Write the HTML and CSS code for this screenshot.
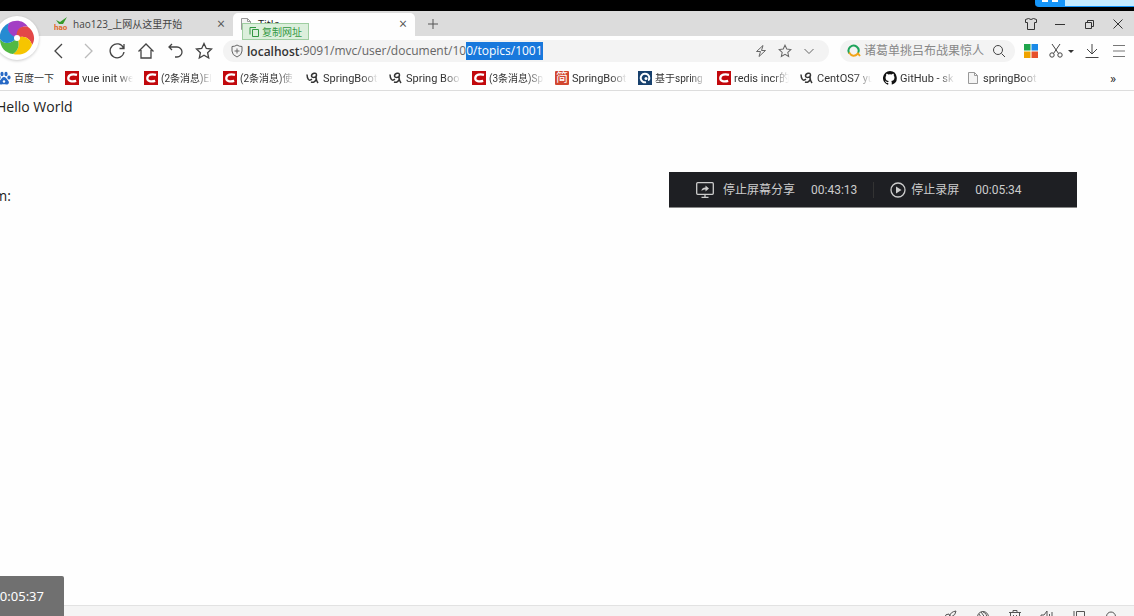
FILE: index.html
```html
<!DOCTYPE html>
<html lang="zh-CN">
<head>
    <meta charset="UTF-8">
    <title>Title</title>
    <link rel="stylesheet" href="styles.css">
</head>
<body>
    <!-- 共用图标 -->
    <svg class="symbols" aria-hidden="true">
        <symbol id="csdn" viewBox="0 0 14 14"><path fill="#c2080c" d="M0 0h14v14H0z"/><path d="M12 3.900C8 2.800 3.700 3.500 3.300 7c-.4 3.500 4 4 7.900 2.900" fill="none" stroke="#fff" stroke-width="2.300"/></symbol>
        <symbol id="spring" viewBox="0 0 14 14"><path d="M1 3.500c.2 5 2 7 5 4.700M5.500 5c0-3 5-4 5-1 0 3-5 3-5 1M10.500 3.500c-1 3-1 5 1.500 8.500M5 11c2.500 1 5-1 5.500-3.500" fill="none" stroke="#333" stroke-width="1.500"/></symbol>
        <symbol id="page" viewBox="0 0 14 14"><path d="M2.500 1.500h6l3 3v8h-9zM8.500 1.500v3h3" fill="#f4f4f4" stroke="#999"/></symbol>
        <symbol id="star" viewBox="0 0 18 18"><path d="M9 1.500l2.300 5 5.200.6-3.900 3.600 1.100 5.300L9 13.300 4.300 16l1.100-5.300L1.500 7.100l5.200-.6z" fill="none" stroke="currentColor" stroke-width="1.300"/></symbol>
    </svg>

    <div class="screen-edge"><div class="share-hint"><span></span></div></div>

    <header class="browser">
        <div class="logo">
            <svg viewBox="0 0 36 36">
                <path fill="#a33fc4" d="M18 18C10 16 6 9 10 3c6-4 15-3 19 4-7-2-11 3-11 11z"/>
                <path fill="#e34848" d="M18 18c-2-8 4-13 11-11 6 4 8 12 4 18-2-7-8-10-15-7z"/>
                <path fill="#f6c500" d="M18 18c7-3 13 0 15 7-3 8-11 11-19 9 6-4 7-10 4-16z"/>
                <path fill="#53b943" d="M18 18c3 6 2 12-4 16C6 33 1 27 1 19c4 6 11 5 17-1z"/>
                <path fill="#258bd2" d="M18 18C12 24 5 25 1 19 0 12 4 6 10 3c-3 6 0 12 8 15z"/>
                <circle cx="18" cy="18" r="3" fill="#fff"/>
            </svg>
        </div>

        <div class="tabs">
            <div class="tab">
                <svg class="fav" viewBox="0 0 14 14"><path d="M2 3l4 2 7-5-4 7H5z" fill="#379b2b"/><text x="0" y="13" font-size="8" font-weight="bold" fill="#e06a28">hao</text></svg>
                <span class="tab-title">hao123_上网从这里开始</span>
                <button class="tab-close" aria-label="关闭标签">×</button>
            </div>
            <div class="tab active">
                <svg class="fav"><use href="#page"/></svg>
                <span class="tab-title">Title</span>
                <button class="tab-close" aria-label="关闭标签">×</button>
                <button class="copy-url">
                    <svg viewBox="0 0 10 10"><path d="M3.500 2.500h6v7h-6zM1 7.500V.5h6" fill="none" stroke="currentColor"/></svg>复制网址
                </button>
            </div>
            <button class="new-tab" aria-label="新标签"><svg viewBox="0 0 12 12"><path d="M6 1v10M1 6h10"/></svg></button>
            <div class="window-buttons">
                <button aria-label="皮肤"><svg viewBox="0 0 14 14"><path d="M4.500 1.500q2.500 2 5 0l3 1v3h-2v7h-7v-7h-2v-3z"/></svg></button>
                <button aria-label="最小化"><svg viewBox="0 0 14 14"><path d="M2 7.500h10"/></svg></button>
                <button aria-label="还原"><svg viewBox="0 0 14 14"><path d="M3.500 5.500h6v6h-6zM5.500 5V3.500h6v6H10"/></svg></button>
                <button aria-label="关闭"><svg viewBox="0 0 14 14"><path d="M2.500 2.500l9 9M11.500 2.500l-9 9"/></svg></button>
            </div>
        </div>

        <div class="toolbar">
            <nav class="nav-buttons">
                <button aria-label="后退"><svg viewBox="0 0 18 18"><path d="M12 2L5 9l7 7"/></svg></button>
                <button aria-label="前进" disabled><svg viewBox="0 0 18 18"><path d="M6 2l7 7-7 7"/></svg></button>
                <button aria-label="刷新"><svg viewBox="0 0 18 18"><path d="M15.500 6A7 7 0 1 0 16 10M16 2v4.500h-4.500"/></svg></button>
                <button aria-label="主页"><svg viewBox="0 0 18 18"><path d="M1.500 9.500L9 2l7.500 7.500M4 8v8h10V8"/></svg></button>
                <button aria-label="恢复"><svg viewBox="0 0 18 18"><path d="M3 5h8a5 5 0 0 1 0 10H9M6 2L3 5l3 3"/></svg></button>
                <button aria-label="收藏"><svg><use href="#star"/></svg></button>
            </nav>

            <div class="address">
                <svg class="shield" viewBox="0 0 14 14"><path d="M7 1q2 1.500 5 1.500V7q0 4-5 6-5-2-5-6V2.500Q5 2.500 7 1zM7 4.500v5M4.500 7h5"/></svg>
                <label for="url">localhost</label>
                <input id="url" type="text" value=":9091/mvc/user/document/100/topics/1001" spellcheck="false">
                <button aria-label="极速模式"><svg viewBox="0 0 14 14"><path d="M9 1.500L2.500 7.500h4L5 12.500l6.500-6h-4z"/></svg></button>
                <button aria-label="收藏网址"><svg><use href="#star"/></svg></button>
                <button aria-label="展开"><svg viewBox="0 0 14 14"><path d="M2.500 5L7 9.500 11.500 5"/></svg></button>
            </div>

            <div class="search">
                <svg class="engine" viewBox="0 0 14 14"><path d="M2.500 9.500A5 5 0 1 1 11 9" fill="none" stroke="#20a45c" stroke-width="2"/><path d="M2 8.500q4 6 9 1l2 2.500" fill="none" stroke="#f0a419" stroke-width="2"/></svg>
                <input type="text" placeholder="诸葛单挑吕布战果惊人" aria-label="搜索">
                <button aria-label="搜索"><svg viewBox="0 0 14 14"><circle cx="6" cy="6" r="4.500"/><path d="M9.500 9.500L13 13"/></svg></button>
            </div>

            <div class="tools">
                <button aria-label="应用"><svg viewBox="0 0 14 14" class="apps"><path fill="#1fa54b" d="M0 0h6.500v6.500H0z"/><path fill="#1a8ae8" d="M7.500 0H14v6.500H7.500z"/><path fill="#efa300" d="M0 7.500h6.500V14H0z"/><path fill="#e6512c" d="M7.500 7.500H14V14H7.500z"/></svg></button>
                <button class="cut" aria-label="截图"><svg viewBox="0 0 14 14"><path d="M3 0l6.500 9.500M11 0L4.500 9.500"/><circle cx="3" cy="11" r="2.200"/><circle cx="11" cy="11" r="2.200"/></svg><i></i></button>
                <button aria-label="下载"><svg viewBox="0 0 14 14"><path d="M7 0v10M2 5l5 5 5-5M.5 13.500h13"/></svg></button>
                <button aria-label="菜单"><svg viewBox="0 0 14 14" class="menu"><path d="M1 1.500h12M1 7h12M1 12.500h12"/></svg></button>
            </div>
        </div>

        <nav class="bookmarks">
            <a class="first" href="#"><svg viewBox="0 0 14 14" fill="#2668c5"><ellipse cx="2" cy="6.500" rx="1.600" ry="2"/><ellipse cx="5" cy="3" rx="1.600" ry="2.200"/><ellipse cx="9" cy="3" rx="1.600" ry="2.200"/><ellipse cx="12" cy="6.500" rx="1.600" ry="2"/><path d="M7 6c2 0 2.500 2 4 3.500 2 2 .5 4-1.500 4-1.500 0-3.500-.5-5 0-2.500.3-3.500-2.500-1.500-4C4.500 8 5 6 7 6z"/><circle cx="7" cy="10.500" r="1.200" fill="#fff"/></svg><span>百度一下</span></a>
            <a class="narrow" href="#"><svg><use href="#csdn"/></svg><span>vue init we</span></a>
            <a class="narrow zh" href="#"><svg><use href="#csdn"/></svg><span>(2条消息)El</span></a>
            <a class="zh" href="#"><svg><use href="#csdn"/></svg><span>(2条消息)使</span></a>
            <a href="#"><svg><use href="#spring"/></svg><span>SpringBoot</span></a>
            <a href="#"><svg><use href="#spring"/></svg><span>Spring Boo</span></a>
            <a class="zh" href="#"><svg><use href="#csdn"/></svg><span>(3条消息)Sp</span></a>
            <a href="#"><svg viewBox="0 0 14 14"><rect width="14" height="14" rx="1" fill="#d2472f"/><text x="1" y="11" font-size="12" fill="#fff">简</text></svg><span>SpringBoot</span></a>
            <a class="narrow zh" href="#"><svg viewBox="0 0 14 14"><path fill="#17406d" d="M0 0h14v14H0z"/><path d="M8 11.200A4.300 4.300 0 1 1 11.300 7q0 2-1.300 2" fill="none" stroke="#fff" stroke-width="2"/><circle cx="8" cy="7.500" r="1.500" fill="#fff"/></svg><span>基于spring</span></a>
            <a href="#"><svg><use href="#csdn"/></svg><span>redis incr的</span></a>
            <a href="#"><svg><use href="#spring"/></svg><span>CentOS7 yu</span></a>
            <a href="#"><svg viewBox="0 0 16 16"><path fill="#111" d="M8 0a8 8 0 0 0-2.500 15.600c.4.100.5-.2.500-.4v-1.500c-2.200.5-2.700-.9-2.700-.9-.4-.9-.9-1.200-.9-1.200-.7-.5.100-.5.100-.5.800.1 1.200.8 1.200.8.700 1.200 1.900.9 2.300.7.100-.5.300-.9.500-1.100-1.800-.2-3.600-.9-3.600-4 0-.9.300-1.600.8-2.100-.1-.2-.4-1 .1-2.100 0 0 .7-.2 2.200.8a7.600 7.600 0 0 1 4 0c1.500-1 2.200-.8 2.200-.8.400 1.100.2 1.900.1 2.100.5.600.8 1.300.8 2.100 0 3.100-1.900 3.700-3.700 3.900.3.300.6.800.6 1.500v2.200c0 .2.100.5.500.4A8 8 0 0 0 8 0z"/></svg><span>GitHub - sk</span></a>
            <a href="#"><svg><use href="#page"/></svg><span>springBoot</span></a>
            <button class="more" aria-label="更多书签">»</button>
        </nav>
    </header>

    <main class="content">
        <p>Hello World</p>
        <p class="form-label">Form:</p>

        <div class="recorder">
            <button>
                <svg viewBox="0 0 18 16"><rect x=".7" y=".7" width="16.600" height="11.600" rx="1"/><path d="M9 12.500V15M5.500 15.300h7"/><path d="M5.500 9q0-3.500 4-3.500V3.500l3.500 3-3.500 3v-2Q7 7 5.500 9z" class="solid"/></svg>停止屏幕分享
            </button>
            <time>00:43:13</time>
            <button class="stop">
                <svg viewBox="0 0 16 16"><circle cx="8" cy="8" r="7"/><path d="M6 4.500v7L11.500 8z" class="solid"/></svg>停止录屏
            </button>
            <time>00:05:34</time>
        </div>
    </main>

    <footer class="status">
        <button aria-label="加速"><svg viewBox="0 0 14 14"><path d="M1 7q0-3 4-3l1 3q-2 2-5 0M6 6q0-4 6-5 0 4-5 6"/></svg></button>
        <button aria-label="护眼"><svg viewBox="0 0 14 14"><circle cx="7" cy="7" r="5.500"/><path d="M3 4l4 6M5 2l5 7M7 2q4 1 4 7"/></svg></button>
        <button aria-label="清理"><svg viewBox="0 0 14 14"><path d="M1 2.500h12M5 2V.5h4V2M2.500 3v10h9V3M5.500 5v6M8.500 5v6"/></svg></button>
        <button aria-label="静音"><svg viewBox="0 0 14 14"><path d="M1 5h3l3-4v12L4 9H1zM9.500 4v7M12 2v10"/></svg></button>
        <button aria-label="分屏"><svg viewBox="0 0 14 14"><path d="M4.500 1.500h8v9h-8zM2 1v12h7"/></svg></button>
        <button aria-label="缩放"><svg viewBox="0 0 14 14"><circle cx="7" cy="6.500" r="4.500"/></svg></button>
    </footer>

    <div class="clock">00:05:37</div>

    <script>
        // 选中地址的后半部分
        const url = document.getElementById('url');
        url.focus();
        url.setSelectionRange(url.value.indexOf('0/topics'), url.value.length);
    </script>
</body>
</html>
```
FILE: styles.css
```css
* {
    margin: 0;
    padding: 0;
    box-sizing: border-box;
}

body {
    height: 100vh;
    display: flex;
    flex-direction: column;
    position: relative;
    overflow: hidden;
    background: #fefefe;
    color: #222;
    font-family: Roboto, "Noto Sans CJK SC", sans-serif;
    font-size: 11px;
}

button,
input {
    border: 0;
    outline: 0;
    background: none;
    color: inherit;
    font: inherit;
}

button {
    display: flex;
    align-items: center;
    justify-content: center;
    flex: none;
}

svg {
    width: 14px;
    height: 14px;
    flex: none;
    display: block;
}

button svg,
.shield {
    fill: none;
    stroke: currentColor;
}

.symbols {
    position: absolute;
    width: 0;
    height: 0;
}

/* 顶部黑边 */
.screen-edge {
    height: 11px;
    flex: none;
    background: #000;
    display: flex;
    justify-content: flex-end;
}

.share-hint {
    width: 99px;
    height: 7px;
    border: 1px solid #1696fa;
    border-width: 0 0 1px;
    border-bottom-left-radius: 4px;
    background: linear-gradient(to right, #1696fa 30px, #c5ebff 30px);
}

.share-hint span {
    display: block;
    width: 16px;
    height: 2px;
    margin-left: 7px;
    background: linear-gradient(to right, #fff 6px, transparent 6px, transparent 10px, #fff 10px);
}

.browser {
    position: relative;
    flex: none;
}

.logo {
    position: absolute;
    left: -5px;
    top: 5px;
    z-index: 2;
    padding: 4px;
    border-radius: 50%;
    background: #fff;
    box-shadow: 0 1px 3px rgba(0, 0, 0, 0.2);
}

.logo svg {
    width: 36px;
    height: 36px;
}

/* 标签栏 */
.tabs {
    display: flex;
    align-items: center;
    height: 25px;
    padding-left: 48px;
    background: #dcdcdc;
    font-size: 10px;
}

.tab {
    display: flex;
    align-items: center;
    gap: 5px;
    width: 185px;
    height: 24px;
    padding: 0 6px;
    position: relative;
    color: #444;
    font-family: "Open Sans", "Noto Sans CJK SC", sans-serif;
}

.tab.active {
    width: 182px;
    height: 23px;
    align-self: flex-end;
    padding-bottom: 2px;
    border-radius: 5px 5px 0 0;
    background: #fefefe;
}

.tab-title {
    flex: 1;
    white-space: nowrap;
}

.active .tab-title {
    color: #222;
    font-size: 11px;
}

.fav text {
    font-family: Roboto, sans-serif;
}

.tab-close {
    width: 12px;
    color: #555;
    font-size: 14px;
}

.copy-url {
    position: absolute;
    left: 9px;
    top: 10px;
    z-index: 3;
    gap: 3px;
    height: 17px;
    padding: 0 6px;
    border: 1px solid #9fcea1;
    background: #dcefdc;
    color: #349843;
}

.copy-url svg {
    width: 10px;
    height: 10px;
}

.new-tab {
    margin-left: 12px;
    color: #555;
}

.new-tab svg {
    width: 12px;
    height: 12px;
}

.window-buttons {
    display: flex;
    gap: 15px;
    margin-left: auto;
    padding-right: 9px;
    color: #333;
}

/* 工具栏 */
.toolbar {
    display: flex;
    align-items: center;
    height: 30px;
    padding: 0 8px 0 50px;
    color: #444;
}

.nav-buttons {
    display: flex;
    gap: 11px;
    margin-right: 10px;
}

.nav-buttons svg {
    width: 18px;
    height: 18px;
    stroke-width: 1.3;
}

.nav-buttons button:disabled {
    color: #bbb;
}

.address,
.search {
    display: flex;
    align-items: center;
    height: 22px;
    border-radius: 11px;
    background: #f3f3f3;
    font-size: 12px;
}

.address {
    flex: 1;
    padding: 0 13px 0 7px;
    font-family: "Open Sans", sans-serif;
    color: #666;
}

.address label {
    margin-left: 3px;
    color: #333;
    font-weight: 600;
}

.address input {
    flex: 1;
    min-width: 0;
    height: 18px;
    line-height: 18px;
}

.address input::selection {
    background: #1878dc;
    color: #fff;
}

.address button {
    margin-left: 10px;
}

.search {
    width: 175px;
    margin-left: 11px;
    padding: 0 9px 0 7px;
    gap: 3px;
}

.search input {
    flex: 1;
    min-width: 0;
}

.search input::placeholder {
    color: #888;
}

.tools {
    display: flex;
    gap: 13px;
    margin-left: 9px;
}

.tools .apps {
    stroke: none;
}

.tools .cut {
    gap: 5px;
    margin-right: -2px;
    margin-left: -2px;
}

.cut i {
    border: 3px solid transparent;
    border-top-color: #333;
    border-bottom: 0;
}

.menu {
    color: #777;
}

/* 书签栏 */
.bookmarks {
    display: flex;
    align-items: center;
    gap: 11px;
    height: 25px;
    padding-right: 18px;
    border-bottom: 1px solid #ddd;
}

.bookmarks a {
    display: flex;
    align-items: center;
    gap: 3px;
    flex: none;
    color: #333;
    text-decoration: none;
}

.bookmarks span {
    width: 55px;
    padding-top: 1px;
    overflow: hidden;
    line-height: 16px;
    white-space: nowrap;
    -webkit-mask-image: linear-gradient(to right, #000 70%, transparent);
    mask-image: linear-gradient(to right, #000 70%, transparent);
}

.bookmarks .narrow span {
    width: 51px;
}

.bookmarks .zh span {
    font-size: 10px;
}

.bookmarks .first {
    margin-left: -3px;
}

.bookmarks .first span {
    width: auto;
    font-size: 10px;
    -webkit-mask-image: none;
    mask-image: none;
}

.bookmarks .more {
    margin-left: auto;
    font-size: 13px;
}

/* 页面内容 */
.content {
    flex: 1;
    min-height: 0;
    padding-top: 5px;
    position: relative;
    font-family: "Open Sans", sans-serif;
    font-size: 14px;
    line-height: 22px;
}

.content p {
    margin-left: -4px;
}

.content .form-label {
    margin-top: 67px;
    margin-left: -27px;
}

.recorder {
    position: absolute;
    top: 81px;
    right: 57px;
    display: flex;
    align-items: center;
    width: 408px;
    height: 36px;
    padding-left: 27px;
    border-bottom: 1px solid #888;
    background: #1e1f23;
    color: #ccc;
    font-family: Roboto, "Noto Sans CJK SC", sans-serif;
    font-size: 12px;
}

.recorder button {
    gap: 9px;
}

.recorder svg {
    width: 18px;
    height: 16px;
    stroke-width: 1.3;
}

.recorder .solid {
    fill: currentColor;
    stroke: none;
}

.recorder time {
    margin-left: 16px;
}

.recorder .stop {
    gap: 4px;
    margin-left: 16px;
    padding-left: 15px;
    border-left: 1px solid #333;
    line-height: 14px;
}

/* 底部状态栏 */
.status {
    display: flex;
    justify-content: flex-end;
    align-items: flex-start;
    gap: 18px;
    height: 11px;
    flex: none;
    padding: 4px 16px 0 0;
    border-top: 1px solid #e2e2e2;
    background: #f4f4f4;
    color: #555;
}

.clock {
    position: absolute;
    left: 0;
    bottom: 0;
    width: 64px;
    height: 40px;
    padding-right: 20px;
    border-top-right-radius: 2px;
    background: #707070;
    color: #fff;
    display: flex;
    justify-content: flex-end;
    align-items: center;
    font-family: "Noto Sans", sans-serif;
    font-size: 13px;
}
```
